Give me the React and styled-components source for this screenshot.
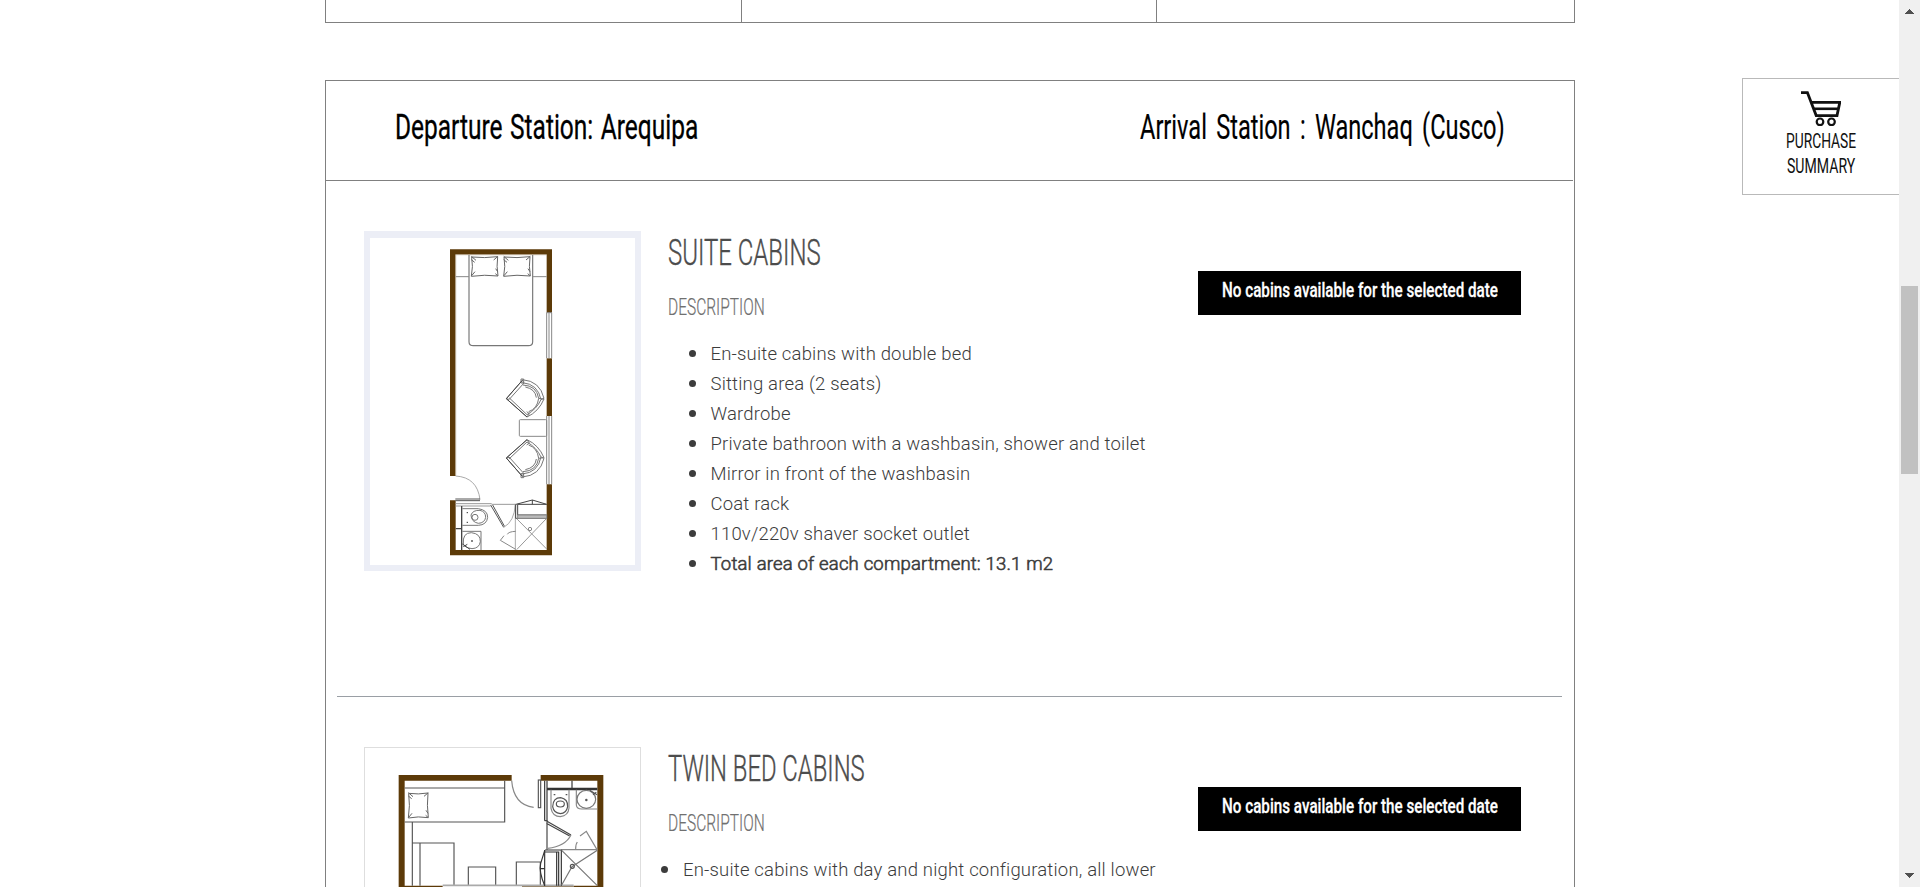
import React, { useLayoutEffect, useRef, useState } from "react";
import styled, { createGlobalStyle } from "styled-components";

const GlobalStyle = createGlobalStyle`
  * { box-sizing: border-box; }
  html, body { margin: 0; padding: 0; overflow: hidden; background: #fff; }
  body { font-family: Roboto, "Liberation Sans", sans-serif; color: #3c3c3c; }
  ul { list-style: none; margin: 0; padding: 0; }
  svg { display: block; }
`;

const Page = styled.div`
  display: flex;
  width: 1920px;
  height: 887px;
  overflow: hidden;
`;

const Content = styled.main`
  flex: 1;
  position: relative;
  display: flex;
  flex-direction: column;
  gap: 57px;
  padding-left: 325px;
  overflow: hidden;
`;

const PreviousTable = styled.div`
  display: grid;
  grid-template-columns: 416px 415px 1fr;
  flex: none;
  width: 1250px;
  height: 23px;
  border: 1px solid #808080;
  border-top: 0;
`;

const PreviousCell = styled.div`
  border-right: 1px solid #808080;
  &:last-child { border-right: 0; }
`;

const Route = styled.section`
  flex: none;
  width: 1250px;
  border: 1px solid #808080;
`;

const RouteHeader = styled.header`
  display: flex;
  justify-content: space-between;
  width: 1247px;
  height: 100px;
  padding: 26px 68px 0 69px;
  border-bottom: 1px solid #808080;
`;

const Cabin = styled.article`
  display: grid;
  grid-template-columns: 277px 505px 323px;
  column-gap: 26px;
  align-items: start;
  height: 515px;
  padding: 50px 0 0 38px;
`;

const Divider = styled.hr`
  width: 1225px;
  height: 1px;
  margin: 0 0 0 11px;
  border: 0;
  background: #9a9fa5;
`;

const Narrow = styled.div`
  width: ${(p) => p.$width}px;
  height: ${(p) => p.$line}px;
  line-height: ${(p) => p.$line}px;
  font-size: ${(p) => p.$size}px;
  font-weight: ${(p) => p.$weight};
  color: ${(p) => p.$color};
  margin-top: ${(p) => p.$gap || 0}px;
  margin-left: ${(p) => p.$indent || 0}px;
  word-spacing: ${(p) => p.$words || 0}px;
  -webkit-text-stroke: ${(p) => p.$stroke || 0}px currentColor;
  white-space: nowrap;
  span { display: inline-block; transform-origin: 0 50%; }
`;

// Condensed lettering: squeezes its text to the width of its box.
function Condensed({ children, width, line, size, weight = 400, color = "#000", gap, indent, words, stroke }) {
  const ref = useRef(null);
  const [scale, setScale] = useState(1);
  useLayoutEffect(() => {
    setScale(width / ref.current.offsetWidth);
  }, [children, width]);
  return (
    <Narrow $width={width} $line={line} $size={size} $weight={weight} $color={color} $gap={gap} $indent={indent} $words={words} $stroke={stroke}>
      <span ref={ref} style={{ transform: `scaleX(${scale})` }}>{children}</span>
    </Narrow>
  );
}

const Features = styled.ul`
  margin-top: 17px;
  padding-left: ${(p) => p.$indent}px;
`;

const Feature = styled.li`
  position: relative;
  font-size: 18.5px;
  line-height: 30px;
  font-weight: 300;
  letter-spacing: 0.18px;
  -webkit-text-stroke: ${(p) => (p.$strong ? 0.6 : 0)}px currentColor;
  &::before {
    content: "";
    position: absolute;
    left: -22px;
    top: 11px;
    width: 7px;
    height: 7px;
    border-radius: 50%;
    background: #3c3c3c;
  }
`;

const Notice = styled.div`
  height: 44px;
  margin-top: 40px;
  padding: 4px 0 0 24px;
  background: #000;
`;

const Summary = styled.aside`
  position: absolute;
  top: 78px;
  right: 0;
  display: flex;
  flex-direction: column;
  align-items: center;
  width: 157px;
  height: 117px;
  padding-top: 12px;
  border: 1px solid #b9b9b9;
  border-right: 0;
  background: #fff;
`;

const Scrollbar = styled.div`
  display: flex;
  flex-direction: column;
  align-items: center;
  flex: none;
  width: 21px;
  background: #f0f0f0;
`;

const Thumb = styled.div`
  width: 17px;
  height: 188px;
  margin-top: 272px;
  margin-bottom: 399px;
  background: #c1c1c1;
`;

const ScrollArrow = styled.svg`
  flex: none;
  margin-top: ${(p) => p.$top || 0}px;
`;

const WALL = "#5c3a08";

function Pillow({ x, y, w, h }) {
  return (
    <g transform={`translate(${x} ${y})`} stroke="#666" fill="none">
      <path d={`M3 4 Q${w / 2} 8 ${w - 3} 3 Q${w - 7} ${h / 2} ${w - 2} ${h - 3} Q${w / 2} ${h - 8} 2 ${h - 2} Q8 ${h / 2} 3 4`} strokeWidth="3" />
      <path d={`M2 2 L16 14 M2 12 L12 20 M${w - 2} 2 L${w - 15} 13 M${w - 3} ${h - 16} L${w - 9} ${h - 25} M3 ${h - 4} L13 ${h - 16} M${w - 3} ${h - 4} L${w - 10} ${h - 10}`} strokeWidth="3" />
    </g>
  );
}

function Armchair() {
  return (
    <g fill="none" stroke="#777" strokeWidth="3">
      <path d="M439 521 L487 466 L492 474 L447 524" />
      <path d="M487 464 Q540 468 552 520 L543 524 Q534 477 487 473" />
      <path d="M489 480 Q530 482 536 520 M496 486 Q526 492 529 518" />
      <path d="M447 523 L439 521 L501 576 Q536 560 552 522 L536 520 Q532 551 506 560" />
      <path d="M447 518 L501 569 Q530 552 543 524" />
      <path d="M483 462 h8 v12 h-8 z M500 560 l8 6 l-7 10" />
      <path d="M439 521 L487 466 M439 521 L501 576" stroke="#444" />
    </g>
  );
}

function SuitePlan() {
  return (
    <svg width="277" height="340" viewBox="12 18 831 1020">
      <rect x="12" y="18" width="831" height="1020" fill="#eceef6" />
      <rect x="30" y="39" width="795" height="981" fill="#fff" />
      <g fill={WALL}>
        <path d="M270 73 H576 V263 H560 V89 H287 V753 H270 Z" />
        <rect x="560" y="400" width="16" height="173" />
        <path d="M270 826 H287 V975 H560 V778 H576 V991 H270 Z" />
      </g>
      <g fill="none" stroke="#888" strokeWidth="3">
        <path d="M287 89 V751 M287 89 H560" stroke="#b9aa92" />
        <path d="M327 90 V350 Q327 362 340 362 H505 Q518 362 518 350 V90" stroke="#777" strokeWidth="3.5" />
        <path d="M287 155 H327 M518 155 H560" />
        <path d="M560 263 V400 M567 263 V400 M575 263 V400 M560 263 H576 M560 573 V778 M567 573 V778 M575 573 V778" />
        <rect x="478" y="584" width="82" height="50" rx="3" />
        <path d="M287 753 Q352 757 360 824" stroke="#aaa" />
        <path d="M286 822 H360 M286 827 H360" stroke="#555" strokeWidth="3" />
        <path d="M287 836 H395 M287 843 H392 M395 838 H465" stroke="#999" />
        <path d="M305 843 V975 M287 911 H305" stroke="#444" strokeWidth="4" />
        <path d="M392 840 L431 907 M398 840 L434 905" stroke="#555" />
        <path d="M431 907 Q463 890 466 838 M466 836 V975" stroke="#aaa" />
        <path d="M468 838 L517 825 L560 838 M473 838 V870 H560 M467 838 V880 H560 M473 838 H560 M517 825 V838" stroke="#444" />
        <rect x="473" y="870" width="87" height="10" fill="#bbb" />
        <path d="M470 881 L560 972 M558 882 L470 974" stroke="#999" />
        <circle cx="510" cy="912" r="5" />
        <path d="M467 919 Q445 920 442 928 M432 932 L421 946 L467 973" />
      </g>
      <Pillow x={332} y={92} w={84} h={64} />
      <Pillow x={429} y={92} w={84} h={64} />
      <Armchair />
      <g transform="matrix(1 0 0 -1 0 1220)"><Armchair /></g>
      <g fill="none" stroke="#777" strokeWidth="3">
        <path d="M307 851 H355 Q383 855 383 877 Q380 900 355 901 H307" />
        <path d="M333 870 Q338 855 360 856 Q377 860 377 877 Q374 894 355 895 Q334 891 333 870" />
        <circle cx="345" cy="877" r="9" />
        <path d="M320 863 h4 M320 892 h4" stroke="#333" />
        <path d="M307 919 H363 V975 M310 957 Q307 923 334 923 Q362 926 361 950 Q358 970 336 971 Q314 968 310 957" />
        <circle cx="336" cy="948" r="2" fill="#333" />
        <path d="M307 957 L330 973 M310 965 L322 958" stroke="#444" />
      </g>
    </svg>
  );
}

function TwinPlan() {
  return (
    <svg width="277" height="200" viewBox="133 202 831 600">
      <rect x="134.5" y="203.5" width="828" height="700" fill="#fff" stroke="#dedede" strokeWidth="3" />
      <g fill={WALL}>
        <path d="M237 286 H576 V303 H255 V618 H369 V635 H237 Z" />
        <path d="M663 286 H851 V635 H762 V618 H833 V303 H663 Z" />
        <rect x="607" y="620" width="155" height="15" />
      </g>
      <g fill="none" stroke="#555" strokeWidth="3.5">
        <path d="M255 325 H555 M555 303 V427 H255 M278 427 V618 M278 490 H403 V618 M301 490 V618" />
        <path d="M446 618 V562 H528 V618 M590 618 V547 H662 V618" />
        <path d="M369 617 H762" stroke="#aaa" strokeWidth="5" />
        <path d="M576 303 Q582 376 642 383" stroke="#888" />
        <rect x="656" y="301" width="7" height="83" />
        <path d="M675 303 V423 M682 303 V423 M682 326 H833 M682 330 H833 M757 303 V326" stroke="#333" />
        <path d="M675 423 H682 V510 M682 425 L754 466 M680 431 L750 469" stroke="#444" />
        <path d="M754 466 Q737 500 684 506 M725 510 H833 M768 508 Q768 493 773 487 M781 469 L800 455 L832 510" stroke="#888" />
        <path d="M675 511 V618 M675 517 H717 V618 M711 517 V618 M676 511 H725 V618" stroke="#333" />
        <path d="M726 512 L833 618 M833 512 L757 561 L726 616" stroke="#777" />
        <circle cx="758" cy="560" r="6" />
        <path d="M675 513 L663 551 Q657 575 675 618 M662 567 H675" stroke="#333" />
        <path d="M694 330 V386 Q699 411 722 411 Q746 408 748 385 V330" stroke="#888" />
        <path d="M699 381 Q700 354 723 354 Q745 358 744 381 Q740 402 722 402 Q702 400 699 381" />
        <ellipse cx="722" cy="373" rx="12" ry="9" />
        <path d="M702 345 h5 M738 345 h5" />
        <path d="M770 330 V376 Q771 388 786 388 H833" stroke="#888" />
        <ellipse cx="800" cy="359" rx="28" ry="27" stroke="#777" />
        <circle cx="800" cy="361" r="2" />
        <path d="M810 332 L832 345 M820 345 L830 338" />
      </g>
      <Pillow x={264} y={337} w={64} h={80} />
    </svg>
  );
}

function Cart() {
  return (
    <svg width="40" height="35" viewBox="0 0 40 35" fill="none" stroke="#111" strokeWidth="2.2">
      <path d="M0 1.6 H6.4 L15.2 24.6 H36 L38.8 11.4 H10.5" strokeWidth="2.8" />
      <path d="M12 17.8 H37" strokeWidth="2.6" />
      <circle cx="19" cy="30.8" r="3.3" />
      <circle cx="30.5" cy="30.8" r="3.3" />
    </svg>
  );
}

function CabinRow({ title, titleWidth, plan, indent, features }) {
  return (
    <Cabin>
      {plan}
      <div>
        <Condensed width={titleWidth} line={44} size={36.5} weight={300} color="#4c4c4c" indent={1} stroke={0.4}>{title}</Condensed>
        <Condensed width={97} line={30} size={23.5} weight={300} color="#707070" gap={17} indent={0.5} stroke={0.2}>DESCRIPTION</Condensed>
        <Features $indent={indent}>
          {features.map((f) => (
            <Feature key={f.text} $strong={f.strong}>{f.text}</Feature>
          ))}
        </Features>
      </div>
      <Notice>
        <Condensed width={276} line={30} size={21} weight={500} color="#fff" stroke={0.3}>No cabins available for the selected date</Condensed>
      </Notice>
    </Cabin>
  );
}

const suiteFeatures = [
  { text: "En-suite cabins with double bed" },
  { text: "Sitting area (2 seats)" },
  { text: "Wardrobe" },
  { text: "Private bathroon with a washbasin, shower and toilet" },
  { text: "Mirror in front of the washbasin" },
  { text: "Coat rack" },
  { text: "110v/220v shaver socket outlet" },
  { text: "Total area of each compartment: 13.1 m2", strong: true },
];

const twinFeatures = [
  { text: "En-suite cabins with day and night configuration, all lower berths" },
];

export default function App() {
  return (
    <Page>
      <GlobalStyle />
      <Content>
        <PreviousTable>
          <PreviousCell />
          <PreviousCell />
          <PreviousCell />
        </PreviousTable>
        <Route>
          <RouteHeader>
            <Condensed width={303} line={40} size={34.5} words={2} stroke={0.3}>Departure Station: Arequipa</Condensed>
            <Condensed width={365} line={40} size={34.5} words={5} stroke={0.2}>Arrival Station : Wanchaq (Cusco)</Condensed>
          </RouteHeader>
          <CabinRow title="SUITE CABINS" titleWidth={153} plan={<SuitePlan />} indent={43.5} features={suiteFeatures} />
          <Divider />
          <CabinRow title="TWIN BED CABINS" titleWidth={197} plan={<TwinPlan />} indent={16} features={twinFeatures} />
        </Route>
        <Summary>
          <Cart />
          <Condensed width={70} line={25} size={20.5} color="#111" gap={3}>PURCHASE</Condensed>
          <Condensed width={68} line={25} size={20.5} color="#111">SUMMARY</Condensed>
        </Summary>
      </Content>
      <Scrollbar>
        <ScrollArrow $top={9} width="9" height="5" viewBox="0 0 9 5" shapeRendering="crispEdges">
          <path d="M4.5 0 L9 5 H0 Z" fill="#505050" />
        </ScrollArrow>
        <Thumb />
        <ScrollArrow width="9" height="5" viewBox="0 0 9 5" shapeRendering="crispEdges">
          <path d="M0 0 H9 L4.5 5 Z" fill="#505050" />
        </ScrollArrow>
      </Scrollbar>
    </Page>
  );
}
